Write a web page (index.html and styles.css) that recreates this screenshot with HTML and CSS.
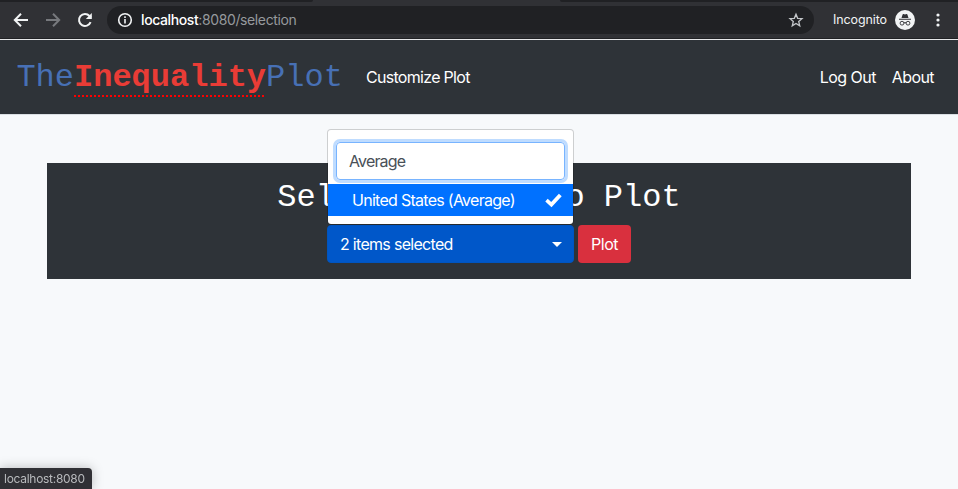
FILE: index.html
```html
<!DOCTYPE html>
<html lang="en">
<head>
<meta charset="utf-8">
<title>The Inequality Plot</title>
<link rel="stylesheet" href="styles.css">
</head>
<body>
<header class="toolbar">
  <div class="tabs"><span class="tab-left"></span><span class="tab-right"></span></div>
  <div class="controls">
    <svg class="nav-icon" viewBox="0 0 16 16"><path d="M15 8H2M8 1.7 1.8 8 8 14.3"/></svg>
    <svg class="nav-icon muted" viewBox="0 0 16 16"><path d="M1 8h13M8 1.7 14.2 8 8 14.3"/></svg>
    <svg class="nav-icon" viewBox="0 0 16 16"><path d="M13.6 10.2A6 6 0 1 1 12.5 4L14 5.5"/><path class="solid" d="M14.8 1v6H8.8z"/></svg>
    <div class="address">
      <svg class="info" viewBox="0 0 16 16"><circle cx="8" cy="8" r="6.3"/><path d="M8 7v4.5M8 4.3v1.6"/></svg>
      <span class="url"><b>localhost</b>:8080/selection</span>
      <svg class="star" viewBox="0 0 24 24"><path d="m12 3.5 2.5 6 6.5.5-4.9 4.3 1.5 6.3-5.6-3.4-5.6 3.4 1.5-6.3L3 10l6.5-.5z"/></svg>
    </div>
    <span class="incognito">Incognito</span>
    <svg class="avatar" viewBox="0 0 20 20"><circle cx="10" cy="10" r="10" fill="#f1f3f4"/><path d="M6.5 8 7.6 4.4q.3-.7 1-.4l1.4.4 1.4-.4q.7-.3 1 .4L13.5 8zM4 8.8h12v1H4z" fill="#303135"/><path d="M8.9 13q1.1-.8 2.2 0" fill="none" stroke="#303135"/><circle cx="7" cy="13.2" r="1.9" fill="none" stroke="#303135" stroke-width=".9"/><circle cx="13" cy="13.2" r="1.9" fill="none" stroke="#303135" stroke-width=".9"/></svg>
    <svg class="dots" viewBox="0 0 4 14"><circle cx="2" cy="2" r="1.6"/><circle cx="2" cy="7" r="1.6"/><circle cx="2" cy="12" r="1.6"/></svg>
  </div>
</header>
<nav class="navbar">
  <a class="brand">The<strong>Inequality</strong>Plot</a>
  <a class="link customize">Customize Plot</a>
  <a class="link logout">Log Out</a>
  <a class="link about">About</a>
</nav>
<main class="panel">
  <h1>Select States to Plot</h1>
  <div class="actions">
    <div class="picker">
      <button class="toggle"><span>2 items selected</span><i class="caret"></i></button>
      <div class="menu">
        <div class="search"><span>Average</span></div>
        <div class="option"><span>United States (Average)</span><svg class="check" viewBox="0 0 17 15"><path d="M.3 8.4 2.7 5.7 6.2 8.9 13.9.7 16.7 3.2 6.5 14.2z"/></svg></div>
      </div>
    </div>
    <button class="plot"><span>Plot</span></button>
  </div>
</main>
<div class="status">localhost:8080</div>
</body>
</html>
```
FILE: styles.css
```css
* { box-sizing: border-box; }
body {
  margin: 0;
  height: 489px;
  overflow: hidden;
  background: #f7f9fb;
  font: 16px/24px Inter, "Liberation Sans", sans-serif;
  color: #fff;
}
.toolbar {
  height: 40px;
  background: #303135;
  border-bottom: 1px solid #e6e7e9;
  box-shadow: inset 0 -1px #202124;
}
.tabs { display: flex; justify-content: space-between; height: 2px; }
.tab-left, .tab-right { background: #202124; }
.tab-left { width: 313px; border-bottom-right-radius: 3px; }
.tab-right { width: 398px; border-bottom-left-radius: 3px; }
.controls { display: flex; align-items: center; height: 36px; padding: 0 18.5px 0 13px; }
.nav-icon { width: 16px; height: 16px; margin-right: 16px; fill: none; stroke: #f1f3f4; stroke-width: 2; }
.nav-icon .solid { fill: #f1f3f4; stroke: none; }
.muted { stroke: #77797d; }
.address {
  display: flex;
  align-items: center;
  width: 707px;
  height: 28px;
  margin-left: -2px;
  padding: 0 10px;
  border-radius: 14px;
  background: #202124;
}
.info { width: 16px; height: 16px; fill: none; stroke: #f1f3f4; stroke-width: 1.6; }
.url { margin-left: 8px; font-size: 14px; letter-spacing: -.39px; color: #96999d; }
.url b { font-weight: 500; color: #fff; }
.star { width: 16px; height: 16px; margin-left: auto; fill: none; stroke: #c4c7ca; stroke-width: 2; }
.incognito { width: 54px; margin-left: 19px; font-size: 12.5px; letter-spacing: -.1px; color: #f1f3f4; white-space: nowrap; }
.avatar { width: 20px; height: 20px; margin-left: 8px; }
.dots { width: 4px; height: 14px; margin-left: auto; fill: #f1f3f4; }
.navbar {
  display: flex;
  align-items: center;
  height: 75px;
  padding: 0 24px 0 16.4px;
  background: #2e3338;
  border-bottom: 1px solid #dadfe3;
}
.brand, h1 { font-family: "Liberation Mono", monospace; font-size: 32px; font-weight: 400; }
.brand { width: 326.6px; padding-top: 2px; line-height: 38px; color: #4770b5; white-space: nowrap; }
.brand strong {
  display: inline-block;
  height: 38px;
  background: repeating-linear-gradient(90deg, #f00 0 2px, transparent 2px 4px) 0 100% / 100% 2px no-repeat;
  color: #e93c36;
}
.link { letter-spacing: -.7px; white-space: nowrap; }
.customize { margin-left: 23px; }
.logout { margin-left: auto; letter-spacing: -.55px; }
.about { margin-left: 16px; letter-spacing: -.6px; }
.panel {
  width: 864px;
  height: 116px;
  margin: 48px auto 0;
  padding-top: 16px;
  background: #2e3338;
}
h1 { margin: 0; line-height: 38px; text-align: center; }
.actions { display: flex; justify-content: center; gap: 4px; margin-top: 8px; }
.picker { position: relative; width: 247px; }
button { height: 38px; border: 0; border-radius: 4px; font: inherit; color: #fff; letter-spacing: -.7px; }
.toggle {
  display: flex;
  align-items: center;
  justify-content: space-between;
  width: 100%;
  padding: 0 11px 0 12px;
  border: 1px solid #0055c0;
  background: #0057c9;
}
.caret { border: 5px solid transparent; border-top-color: #fff; border-bottom: 0; }
.plot { width: 53px; padding: 0; background: #d9303e; letter-spacing: -.5px; }
.menu {
  position: absolute;
  bottom: 38px;
  left: 0;
  width: 247px;
  height: 96px;
  padding-top: 12px;
  border: 1px solid rgba(0, 0, 0, .17);
  border-radius: 4px;
  background: #fff;
  background-clip: padding-box;
}
.search {
  height: 38px;
  margin: 0 8px 4px;
  padding: 6px 12px;
  border: 1px solid #78b4ff;
  border-radius: 4px;
  box-shadow: 0 0 0 3px #bfdcff;
  color: #495057;
  letter-spacing: -.85px;
}
.option {
  display: flex;
  align-items: center;
  justify-content: space-between;
  height: 32px;
  padding: 0 11px 0 24px;
  background: #0071ff;
  letter-spacing: -.72px;
}
.check { width: 17px; height: 15px; fill: #fff; }
.status {
  position: fixed;
  bottom: 0;
  left: 0;
  width: 92px;
  height: 21px;
  padding-left: 4px;
  border-top-right-radius: 4px;
  background: #303035;
  box-shadow: 0 0 12px rgba(0, 0, 0, .25);
  font-size: 12px;
  line-height: 22px;
  letter-spacing: -.28px;
  color: #b8babd;
}
```
